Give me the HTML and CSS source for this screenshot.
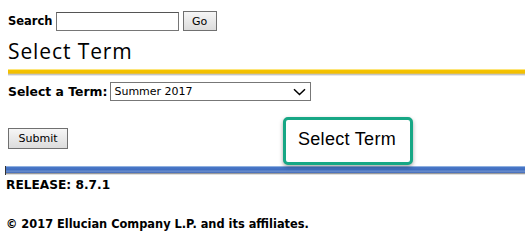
FILE: index.html
```html
<!DOCTYPE html>
<html>
<head>
<meta charset="utf-8">
<link rel="stylesheet" href="styles.css">
</head>
<body>
<div class="page">
  <form class="search">
    <label class="lbl">Search</label>
    <input class="search-input" type="text">
    <button class="btn go" type="button">Go</button>
  </form>
  <h1 class="title">Select Term</h1>
  <div class="bar yellow"></div>
  <div class="term-row">
    <label class="lbl term-lbl">Select a Term:</label>
    <div class="select">
      <span class="select-text">Summer 2017</span>
      <svg class="chev" width="13" height="8" viewBox="0 0 13 8"><path d="M1 1.2 L6.5 6.5 L12 1.2" fill="none" stroke="#000" stroke-width="1.5"/></svg>
    </div>
  </div>
  <div class="submit-row">
    <button class="btn submit" type="button">Submit</button>
    <div class="tooltip">Select Term</div>
  </div>
  <div class="bar blue"></div>
  <div class="footer">
    <div class="release">RELEASE: 8.7.1</div>
    <div class="copy">© 2017 Ellucian Company L.P. and its affiliates.</div>
  </div>
</div>
</body>
</html>
```
FILE: styles.css
```css
html, body { margin: 0; padding: 0; background: #fff; }
body { width: 525px; height: 243px; overflow: hidden; font-family: "DejaVu Sans", Verdana, sans-serif; color: #000; }
.page { position: relative; }
.search { display: flex; align-items: center; padding: 11px 0 0 8px; height: 20px; }
.lbl { font-weight: bold; font-size: 11.5px; }
.search-input { box-sizing: border-box; width: 123px; height: 19px; margin: 0 0 0 3px; border: 1px solid #767676; border-top-color: #555; padding: 0; }
.btn { box-sizing: border-box; font-family: "DejaVu Sans", Verdana, sans-serif; font-size: 11px; color: #000; background: linear-gradient(#f6f6f6, #dcdcdc); border: 1px solid #707070; border-radius: 0; padding: 0; }
.go { width: 34px; height: 20px; margin-left: 4px; }
.title { margin: 8px 0 0 8px; font-family: "Open Sans", sans-serif; font-weight: normal; font-size: 21px; line-height: 24px; height: 27px; letter-spacing: 0.9px; }
.bar { margin-left: 8px; }
.yellow { height: 7px; margin-top: 3px; background: linear-gradient(#fde57a 0, #fde57a 1px, #f5c400 1px, #f2be00 4px, #d8c27a 5px, #c4c4c4 5px, #c4c4c4 6px, #e8e8e8 6px); }
.term-row { display: flex; align-items: center; margin: 6px 0 0 8px; height: 19px; }
.term-lbl { font-size: 12.4px; }
.select { box-sizing: border-box; display: flex; align-items: center; justify-content: space-between; width: 201px; height: 19px; margin-left: 3px; border: 1px solid #777; padding: 0 4px 0 3px; }
.select-text { font-family: "DejaVu Sans", Verdana, sans-serif; font-size: 11px; }
.chev { display: block; }
.submit-row { position: relative; height: 44px; margin: 26px 0 0 8px; }
.submit { width: 60px; height: 21px; }
.tooltip { position: absolute; left: 275px; top: -10px; box-sizing: border-box; width: 130px; height: 48px; border: 3px solid #17a785; border-radius: 5px; background: #fff; font-family: "Liberation Sans", Arial, sans-serif; font-size: 18px; letter-spacing: 0.3px; padding: 9px 0 0 12px; box-shadow: 0 2px 4px rgba(0,0,0,0.35); z-index: 2; }
.blue { margin-left: 5px; height: 9px; margin-top: -5px; border-left: 1px solid #333; background: linear-gradient(#8fb0e0 0, #8fb0e0 1px, #4a78c8 1px, #3f6dbf 4px, #6f92d0 5px, #4169b8 7px, #9a9a9a 7px, #9a9a9a 8px, #e0e0e0 8px); }
.footer { padding-left: 6px; }
.release { font-weight: bold; font-size: 12.2px; margin-top: 3px; line-height: 14px; }
.copy { font-weight: bold; font-size: 11.4px; margin-top: 25px; line-height: 14px; }
```
